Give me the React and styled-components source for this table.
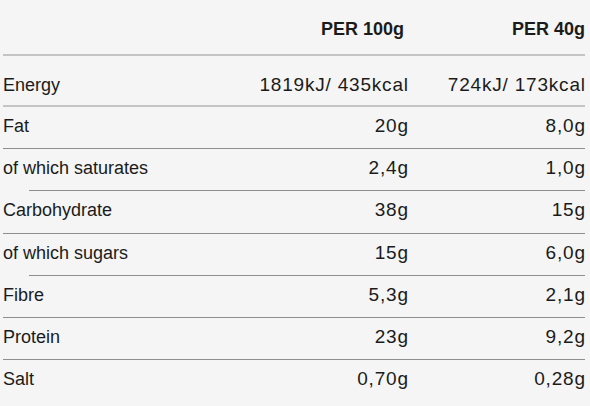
import React from "react";
import styled, { createGlobalStyle } from "styled-components";

const GlobalStyle = createGlobalStyle`
  html, body {
    margin: 0;
    padding: 0;
    background: #f5f5f5;
  }
  body {
    font-family: "Liberation Sans", Arial, sans-serif;
    color: #1b1b1b;
  }
`;

const Table = styled.div`
  width: 582px;
  margin-left: 3px;
  display: flex;
  flex-direction: column;
`;

const Row = styled.div`
  display: grid;
  grid-template-columns: 1fr 160px 177px;
  align-items: baseline;
  box-sizing: border-box;
  height: ${(p) => p.$h}px;
  padding-top: ${(p) => p.$pt}px;
  background-image: linear-gradient(${(p) => p.$line}, ${(p) => p.$line});
  background-repeat: no-repeat;
  background-position: ${(p) => (p.$indent ? "26px" : "0")} 100%;
  background-size: ${(p) => (p.$indent ? "calc(100% - 26px)" : "100%")} ${(p) => p.$lw}px;
`;

const Label = styled.span`
  font-size: 18px;
  line-height: 22px;
  white-space: nowrap;
`;

const Value = styled.span`
  font-size: 19px;
  line-height: 22px;
  letter-spacing: 0.8px;
  margin-right: -0.8px;
  text-align: right;
  white-space: nowrap;
`;

const Head = styled.span`
  font-size: 18px;
  line-height: 22px;
  font-weight: 700;
  text-align: right;
  white-space: nowrap;
  padding-right: ${(p) => p.$pr || 0}px;
`;

const rows = [
  { label: "Energy", a: "1819kJ/ 435kcal", b: "724kJ/ 173kcal", energy: true },
  { label: "Fat", a: "20g", b: "8,0g" },
  { label: "of which saturates", a: "2,4g", b: "1,0g", sub: true },
  { label: "Carbohydrate", a: "38g", b: "15g" },
  { label: "of which sugars", a: "15g", b: "6,0g", sub: true },
  { label: "Fibre", a: "5,3g", b: "2,1g" },
  { label: "Protein", a: "23g", b: "9,2g" },
  { label: "Salt", a: "0,70g", b: "0,28g", last: true },
];

export default function App() {
  return (
    <>
      <GlobalStyle />
      <Table>
        <Row $h={56} $pt={18} $line="#c4c4c4" $lw={2}>
          <span />
          <Head $pr={4}>PER 100g</Head>
          <Head>PER 40g</Head>
        </Row>
        {rows.map((r) => (
          <Row
            key={r.label}
            $h={r.energy ? 51 : 42.2}
            $pt={r.energy ? 18 : 8}
            $line={r.energy ? "#c4c4c4" : r.last ? "transparent" : "#8e8e8e"}
            $lw={r.energy ? 2 : 1}
            $indent={r.sub}
          >
            <Label>{r.label}</Label>
            <Value>{r.a}</Value>
            <Value>{r.b}</Value>
          </Row>
        ))}
      </Table>
    </>
  );
}
